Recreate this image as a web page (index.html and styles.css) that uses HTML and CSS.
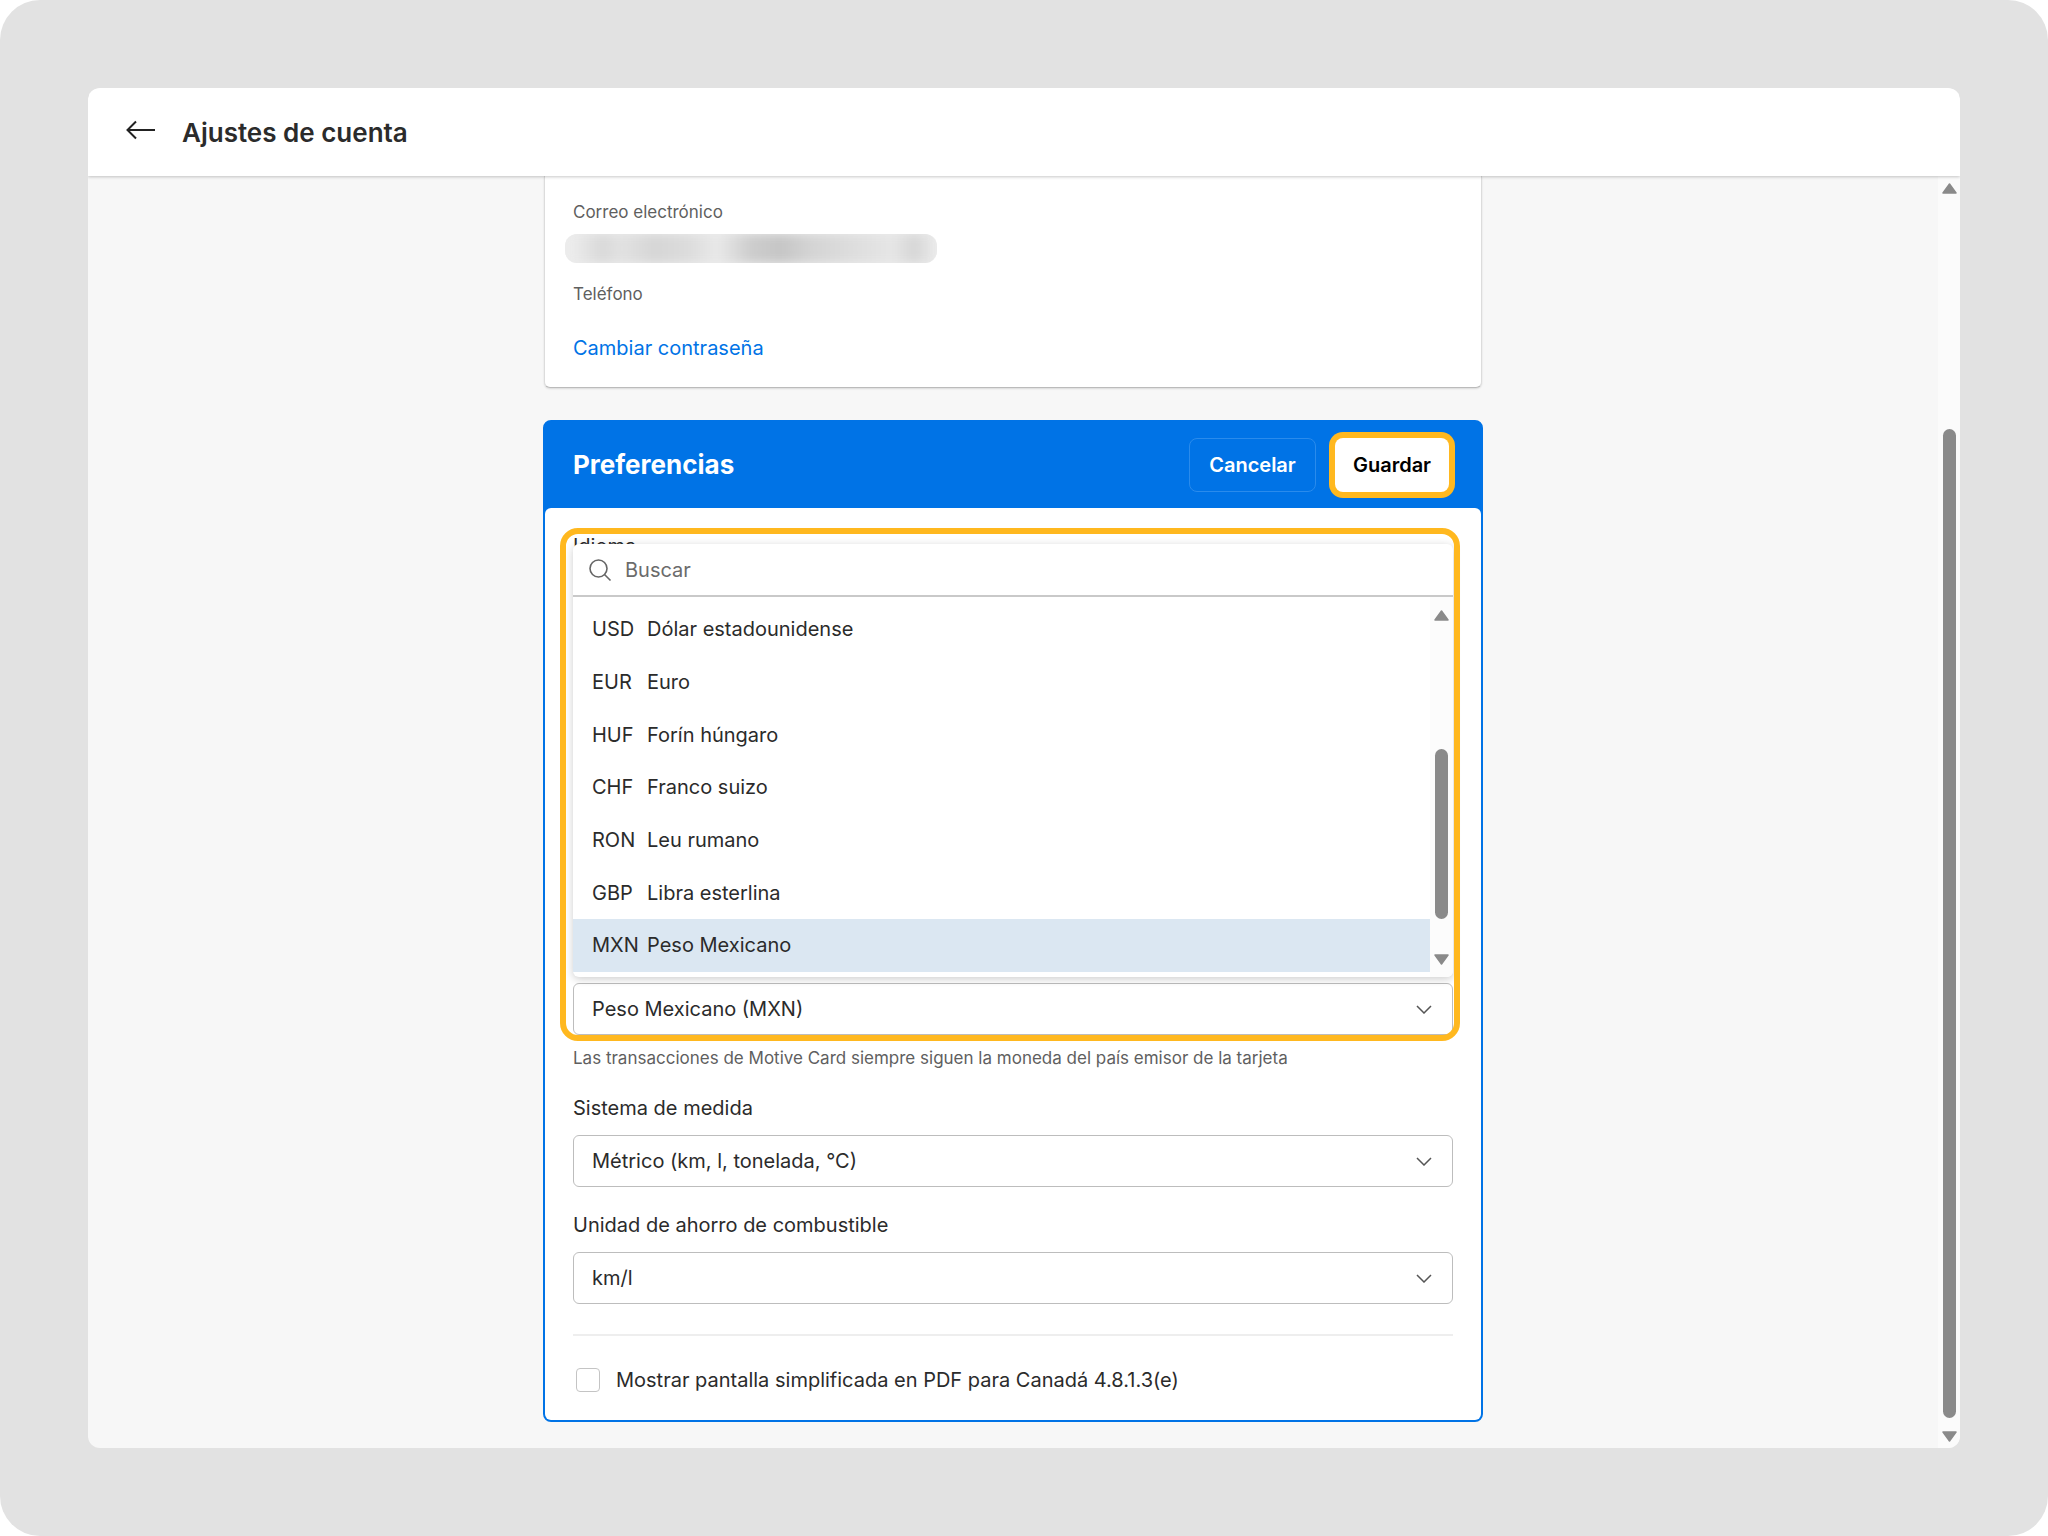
FILE: index.html
```html
<!DOCTYPE html>
<html lang="es">
<head>
    <meta charset="UTF-8">
    <title>Ajustes de cuenta</title>
    <link rel="stylesheet" href="styles.css">
</head>
<body>
    <div class="frame">
        <div class="window">
            <header class="topbar">
                <svg class="back-icon" width="30" height="20" viewBox="0 0 30 20">
                    <path d="M29 10H2M10 1.5 1.5 10l8.500 8.500" fill="none" stroke="#222" stroke-width="2"/>
                </svg>
                <h1>Ajustes de cuenta</h1>
            </header>

            <div class="content">
                <main class="scroller">
                    <section class="card-account">
                        <div class="small-label">Correo electrónico</div>
                        <div class="blurred"><div class="blurred-ink"></div></div>
                        <div class="small-label phone-label">Teléfono</div>
                        <a class="link" href="#">Cambiar contraseña</a>
                    </section>

                    <section class="card-prefs">
                        <div class="prefs-head">
                            <h2>Preferencias</h2>
                            <div class="actions">
                                <button type="button" class="btn-cancel">Cancelar</button>
                                <button type="button" class="btn-save">Guardar</button>
                            </div>
                        </div>

                        <div class="prefs-body">
                            <!-- el resto de campos queda tapado por el desplegable -->
                            <div class="field-covered">Idioma</div>

                            <div class="field">
                                <div class="field-label">Moneda</div>
                                <div class="select">
                                    <span>Peso Mexicano (MXN)</span>
                                    <svg class="chevron" width="16" height="9" viewBox="0 0 16 9"><path d="M1 1l7 7 7-7" fill="none" stroke="#555" stroke-width="1.500"/></svg>
                                </div>
                                <div class="help">Las transacciones de Motive Card siempre siguen la moneda del país emisor de la tarjeta</div>
                            </div>

                            <div class="field">
                                <div class="field-label">Sistema de medida</div>
                                <div class="select">
                                    <span>Métrico (km, l, tonelada, °C)</span>
                                    <svg class="chevron" width="16" height="9" viewBox="0 0 16 9"><path d="M1 1l7 7 7-7" fill="none" stroke="#555" stroke-width="1.500"/></svg>
                                </div>
                            </div>

                            <div class="field">
                                <div class="field-label">Unidad de ahorro de combustible</div>
                                <div class="select">
                                    <span>km/l</span>
                                    <svg class="chevron" width="16" height="9" viewBox="0 0 16 9"><path d="M1 1l7 7 7-7" fill="none" stroke="#555" stroke-width="1.500"/></svg>
                                </div>
                            </div>

                            <div class="divider"></div>

                            <label class="check-row">
                                <span class="checkbox"></span>
                                <span>Mostrar pantalla simplificada en PDF para Canadá 4.8.1.3(e)</span>
                            </label>

                            <div class="dropdown">
                                <div class="search">
                                    <svg width="24" height="24" viewBox="0 0 24 24"><circle cx="10.500" cy="10.500" r="8.500" fill="none" stroke="#666" stroke-width="1.600"/><path d="M16.500 16.500l6 6" fill="none" stroke="#666" stroke-width="1.600"/></svg>
                                    <span>Buscar</span>
                                </div>
                                <div class="list-wrap">
                                    <ul class="list">
                                        <li><span class="code">USD</span>Dólar estadounidense</li>
                                        <li><span class="code">EUR</span>Euro</li>
                                        <li><span class="code">HUF</span>Forín húngaro</li>
                                        <li><span class="code">CHF</span>Franco suizo</li>
                                        <li><span class="code">RON</span>Leu rumano</li>
                                        <li><span class="code">GBP</span>Libra esterlina</li>
                                        <li class="selected"><span class="code">MXN</span>Peso Mexicano</li>
                                    </ul>
                                    <div class="list-scrollbar">
                                        <svg class="arrow" width="15" height="11" viewBox="0 0 15 11"><path d="M7.500 1 14 10H1z" fill="#8a8a8a" stroke="#8a8a8a" stroke-width="1.500" stroke-linejoin="round"/></svg>
                                        <div class="list-thumb"></div>
                                        <svg class="arrow" width="15" height="11" viewBox="0 0 15 11"><path d="M7.500 10 14 1H1z" fill="#8a8a8a" stroke="#8a8a8a" stroke-width="1.500" stroke-linejoin="round"/></svg>
                                    </div>
                                </div>
                            </div>

                            <div class="highlight"></div>
                        </div>
                    </section>
                </main>

                <aside class="page-scrollbar">
                    <svg class="arrow" width="15" height="11" viewBox="0 0 15 11"><path d="M7.500 1 14 10H1z" fill="#8a8a8a" stroke="#8a8a8a" stroke-width="1.500" stroke-linejoin="round"/></svg>
                    <div class="page-thumb"></div>
                    <svg class="arrow" width="15" height="11" viewBox="0 0 15 11"><path d="M7.500 10 14 1H1z" fill="#8a8a8a" stroke="#8a8a8a" stroke-width="1.500" stroke-linejoin="round"/></svg>
                </aside>
            </div>
        </div>
    </div>
</body>
</html>
```

FILE: styles.css
```css
:root {
    --blue: #0073e6;
    --yellow: #ffb81f;
    --text: #2b2b2b;
    --text-secondary: #5f5f5f;
    --line: #bdbdbd;
}

* {
    margin: 0;
    padding: 0;
    box-sizing: border-box;
}

body {
    background: #fff;
    font-family: Inter, "Noto Sans", sans-serif;
    color: var(--text);
}

.frame {
    width: 2048px;
    height: 1536px;
    padding: 88px;
    background: #e2e2e2;
    border-radius: 40px;
}

.window {
    height: 1360px;
    display: flex;
    flex-direction: column;
    background: #f7f7f7;
    border-radius: 12px;
    overflow: hidden;
}

.topbar {
    position: relative;
    height: 88px;
    flex: none;
    display: flex;
    align-items: center;
    padding-left: 38px;
    background: #fff;
    box-shadow: 0 1px 3px rgba(0, 0, 0, 0.22);
}

.back-icon {
    margin-top: -4px;
}

.topbar h1 {
    margin-left: 26px;
    font-size: 26px;
    font-weight: 600;
}

.content {
    flex: 1;
    display: flex;
    min-height: 0;
}

.scroller {
    flex: 1;
    display: flex;
    flex-direction: column;
    align-items: center;
    overflow: hidden;
}

/* primera tarjeta, cortada por arriba por el scroll */
.card-account {
    width: 938px;
    height: 212px;
    flex: none;
    padding: 24px 28px 0;
    background: #fff;
    border: 1px solid #dcdcdc;
    border-top: none;
    border-bottom: 1px solid #bbb;
    border-radius: 0 0 6px 6px;
    box-shadow: 0 1px 2px rgba(0, 0, 0, 0.12);
}

.small-label {
    font-size: 17px;
    line-height: 24px;
    color: var(--text-secondary);
}

.blurred {
    width: 372px;
    height: 29px;
    margin: 10px 0 0 -8px;
    background: #ececec;
    border-radius: 12px;
    overflow: hidden;
}

.blurred-ink {
    height: 100%;
    background: linear-gradient(90deg, #ececec 2%, #d9d9d9 10%, #e2e2e2 15%, #d6d6d6 24%, #dcdcdc 33%, #e9e9e9 41%, #cdcdcd 50%, #c6c6c6 58%, #d4d4d4 66%, #dedede 78%, #e6e6e6 88%, #d6d6d6 94%, #ececec 100%);
    filter: blur(5px);
}

.phone-label {
    margin-top: 19px;
}

.link {
    display: block;
    margin-top: 28px;
    font-size: 20px;
    line-height: 28px;
    color: var(--blue);
    text-decoration: none;
}

.card-prefs {
    width: 940px;
    flex: none;
    margin-top: 32px;
    background: var(--blue);
    border: 2px solid var(--blue);
    border-radius: 8px;
}

.prefs-head {
    height: 88px;
    display: flex;
    align-items: center;
    justify-content: space-between;
    padding: 0 26px 0 28px;
    margin-top: -2px;
}

.prefs-head h2 {
    font-size: 26px;
    font-weight: 700;
    color: #fff;
}

.actions {
    display: flex;
    gap: 19px;
    margin-top: 2px;
}

.actions button {
    height: 54px;
    border-radius: 8px;
    font-family: inherit;
    font-size: 20px;
    font-weight: 600;
}

.btn-cancel {
    width: 127px;
    background: transparent;
    border: 1px solid #2a8bec;
    color: #fff;
}

.btn-save {
    width: 114px;
    margin-right: 6px;
    background: #fff;
    border: none;
    color: #000;
    box-shadow: 0 0 0 6px var(--yellow);
}

.prefs-body {
    position: relative;
    padding: 24px 28px 0;
    height: 912px;
    background: #fff;
    border-radius: 6px;
}

.field-covered {
    height: 410px;
    font-size: 20px;
    line-height: 28px;
}

.field {
    margin-bottom: 24px;
}

.field-label {
    font-size: 20px;
    line-height: 28px;
    margin-bottom: 13px;
}

.select {
    height: 52px;
    display: flex;
    align-items: center;
    justify-content: space-between;
    padding: 0 20px 0 18px;
    border: 1px solid var(--line);
    border-radius: 6px;
    font-size: 20px;
}

.help {
    margin-top: 11px;
    font-size: 17px;
    line-height: 24px;
    color: var(--text-secondary);
}

.divider {
    height: 2px;
    margin-top: 30px;
    background: #eeeeee;
}

.check-row {
    display: flex;
    align-items: center;
    gap: 16px;
    margin-top: 32px;
    padding-left: 3px;
    font-size: 20px;
}

.checkbox {
    width: 24px;
    height: 24px;
    flex: none;
    background: #fff;
    border: 1px solid #c4c4c4;
    border-radius: 4px;
}

/* desplegable abierto sobre el formulario */
.dropdown {
    position: absolute;
    top: 36px;
    left: 28px;
    right: 28px;
    height: 433px;
    background: #fff;
    border-radius: 6px;
    box-shadow: 0 2px 8px rgba(0, 0, 0, 0.2);
    overflow: hidden;
}

.search {
    height: 53px;
    display: flex;
    align-items: center;
    gap: 13px;
    padding-left: 15px;
    border-bottom: 2px solid #c9c9c9;
    font-size: 20px;
    color: #6b6b6b;
}

.list-wrap {
    display: flex;
    height: 380px;
}

.list {
    flex: 1;
    list-style: none;
    padding-top: 6px;
}

.list li {
    height: 52.700px;
    display: flex;
    align-items: center;
    padding-left: 19px;
    font-size: 20px;
}

.list li.selected {
    background: #dbe7f2;
}

.code {
    width: 55px;
    flex: none;
}

.arrow {
    display: block;
    flex: none;
}

.list-scrollbar {
    width: 23px;
    flex: none;
    display: flex;
    flex-direction: column;
    align-items: center;
    padding: 13px 0 12px;
    background: #fcfcfc;
}

.list-thumb {
    width: 13px;
    height: 170px;
    margin-top: auto;
    margin-bottom: 35px;
    background: #8a8a8a;
    border-radius: 7px;
}

.highlight {
    position: absolute;
    top: 20px;
    left: 15px;
    width: 900px;
    height: 513px;
    border: 6px solid var(--yellow);
    border-radius: 18px;
}

.page-scrollbar {
    width: 22px;
    flex: none;
    display: flex;
    flex-direction: column;
    align-items: center;
    padding: 7px 0 6px;
    background: #fbfbfb;
}

.page-thumb {
    width: 13px;
    height: 989px;
    margin-top: auto;
    margin-bottom: 13px;
    background: #8a8a8a;
    border-radius: 7px;
}
```
